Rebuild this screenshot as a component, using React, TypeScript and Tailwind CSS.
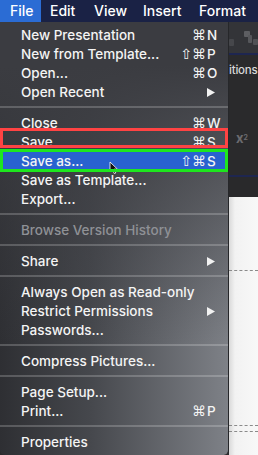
type Row =
  | { sep: true }
  | {
      label: string;
      mods?: string;
      k?: string;
      arrow?: boolean;
      disabled?: boolean;
      active?: boolean;
    };

const rows: Row[] = [
  { label: "New Presentation", mods: "⌘", k: "N" },
  { label: "New from Template...", mods: "⇧⌘", k: "P" },
  { label: "Open...", mods: "⌘", k: "O" },
  { label: "Open Recent", arrow: true },
  { sep: true },
  { label: "Close", mods: "⌘", k: "W" },
  { label: "Save", mods: "⌘", k: "S" },
  { label: "Save as...", mods: "⇧⌘", k: "S", active: true },
  { label: "Save as Template..." },
  { label: "Export..." },
  { sep: true },
  { label: "Browse Version History", disabled: true },
  { sep: true },
  { label: "Share", arrow: true },
  { sep: true },
  { label: "Always Open as Read-only" },
  { label: "Restrict Permissions", arrow: true },
  { label: "Passwords..." },
  { sep: true },
  { label: "Compress Pictures..." },
  { sep: true },
  { label: "Page Setup..." },
  { label: "Print...", mods: "⌘", k: "P" },
  { sep: true },
  { label: "Properties" },
];

function Arrow() {
  return (
    <svg width="8" height="9" viewBox="0 0 8 9">
      <path d="M0 0 L8 4.5 L0 9 Z" fill="#f2f2f2" />
    </svg>
  );
}

function MenuRow({ row }: { row: Row }) {
  if ("sep" in row) {
    return (
      <div className="h-[12px] flex items-center">
        <div className="h-[2px] w-full bg-white/[0.2]" />
      </div>
    );
  }
  return (
    <div
      className={`h-[19px] flex items-center pl-[21px] pr-[6px] pt-[1px] ${
        row.active ? "bg-[#2962cf]" : ""
      } ${row.disabled ? "text-[#8f9196]" : "text-[#f4f4f4]"}`}
    >
      <span className="flex-1 whitespace-nowrap">{row.label}</span>
      <span className="w-[30px] text-right font-['DejaVu_Sans',sans-serif] text-[14px] pr-[1px] whitespace-nowrap">
        {row.mods}
      </span>
      <span className="w-[15px] flex items-center">
        {row.arrow ? <Arrow /> : row.k}
      </span>
    </div>
  );
}

function Cursor() {
  return (
    <svg width="10" height="14" viewBox="0 0 10 14">
      <path
        d="M1 1 L1 11 L3.5 8.6 L5.3 12.6 L6.8 12 L5.1 8.1 L8.4 8.1 Z"
        fill="#111"
        stroke="#fff"
        strokeWidth="0.8"
      />
    </svg>
  );
}

function Toolbar() {
  return (
    <svg width="29" height="31" viewBox="0 0 29 31">
      <rect x="15" y="9" width="6" height="6" rx="1" fill="#5d5e62" />
      <rect x="19" y="13" width="4" height="8" rx="1" fill="#56575b" />
      <rect x="24" y="17" width="5" height="6" rx="1" fill="#505155" />
      <rect x="0" y="17" width="5" height="7" rx="1" fill="#46474b" />
    </svg>
  );
}

export default function App() {
  return (
    <div className="w-[258px] h-[455px] overflow-hidden flex flex-col font-['Inter',sans-serif] font-medium text-[13.5px] leading-[18px] bg-[#2a2a2c]">
      <div className="h-[22px] flex bg-[#1a2245] text-white text-[14px] leading-[22px] whitespace-nowrap">
        <div className="w-[41px] pl-[10px] bg-[#2b6cd4]">File</div>
        <div className="w-[44px] pl-[9px]">Edit</div>
        <div className="w-[49px] pl-[9px]">View</div>
        <div className="w-[56px] pl-[9px]">Insert</div>
        <div className="pl-[9px]">Format</div>
      </div>

      <div className="flex flex-1">
        <div className="relative w-[229px] border-r border-[#26272a] rounded-b-[5px] pt-[3px] pb-[3px] bg-[linear-gradient(to_bottom,#3b3c41_0%,#3b3c41_10%,rgba(59,60,65,0)_75%),linear-gradient(to_right,#2e2f33_0%,#46484d_40%,#7e8187_100%)]">
          {rows.map((r, i) => (
            <MenuRow key={i} row={r} />
          ))}
          <div className="absolute left-[109px] top-[139px]">
            <Cursor />
          </div>
          <div className="absolute left-0 top-[106px] w-[228px] h-[20px] border-[3px] border-[#ff4343]" />
          <div className="absolute left-0 top-[127px] w-[228px] h-[23px] border-[3px] border-[#1ee61e]" />
        </div>

        <div className="flex-1 flex flex-col overflow-hidden">
          <div className="h-[31px] bg-[#333438]">
            <Toolbar />
          </div>
          <div className="h-[2px] bg-[#1e2650]" />
          <div className="h-[120px] bg-[#2a2a2c] text-[#d8d8d8] text-[11.5px]">
            <div className="pt-[6px] whitespace-nowrap leading-[18px] tracking-[-0.2px]">itions</div>
            <div className="mt-[52px] ml-[7px] text-[#6b6b6f] font-bold text-[13px] leading-[14px]">
              x<sup className="text-[7px]">2</sup>
            </div>
          </div>
          <div className="h-[2px] bg-[#1e2650]" />
          <div className="h-[20px] bg-[#29292b]" />
          <div className="flex-1 bg-[linear-gradient(to_right,#d9d9d9,#f2f2f2_6px,#f8f8f8)]">
            <div className="h-[73px]" />
            <div className="border-t border-dashed border-[#8a8a8a]" />
            <div className="h-[154px]" />
            <div className="border-t border-dashed border-[#8a8a8a]" />
            <div className="h-[5px]" />
            <div className="border-t border-dashed border-[#8a8a8a]" />
          </div>
        </div>
      </div>
    </div>
  );
}
